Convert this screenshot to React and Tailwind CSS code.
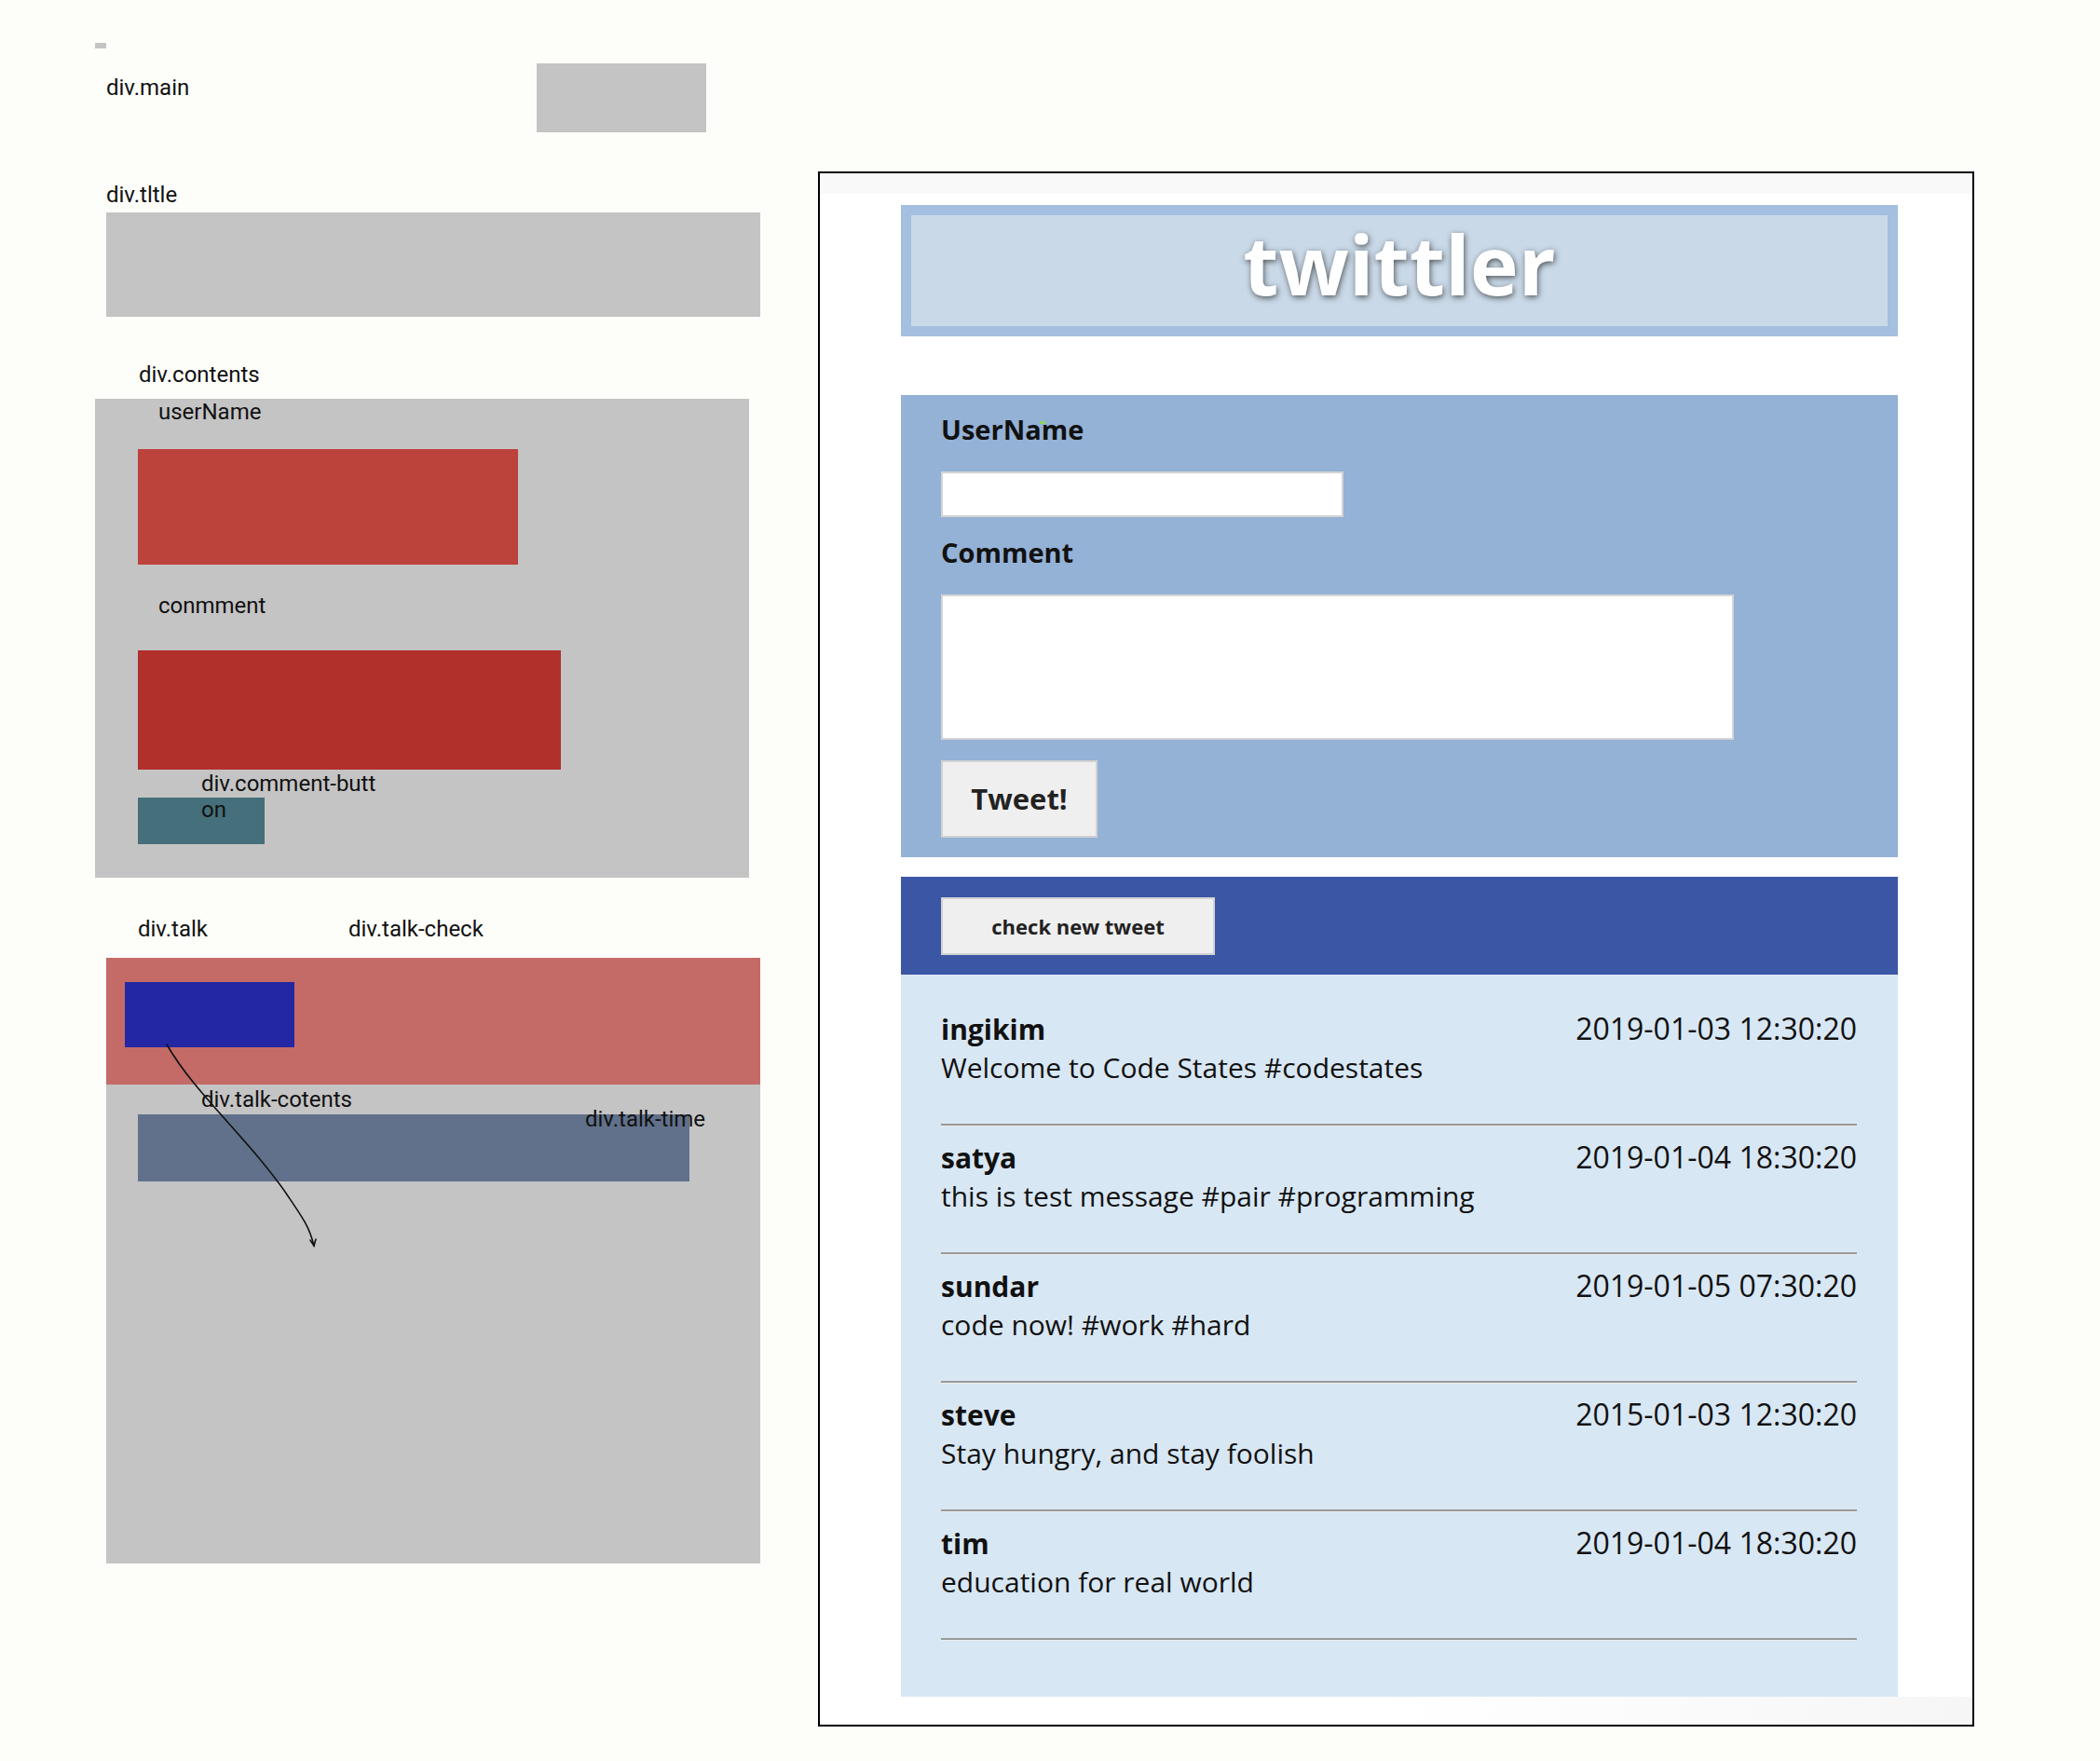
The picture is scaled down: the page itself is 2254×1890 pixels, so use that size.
import React from 'react';

const TWEETS = [
  { user: 'ingikim', message: 'Welcome to Code States #codestates', time: '2019-01-03 12:30:20' },
  { user: 'satya', message: 'this is test message #pair #programming', time: '2019-01-04 18:30:20' },
  { user: 'sundar', message: 'code now! #work #hard', time: '2019-01-05 07:30:20' },
  { user: 'steve', message: 'Stay hungry, and stay foolish', time: '2015-01-03 12:30:20' },
  { user: 'tim', message: 'education for real world', time: '2019-01-04 18:30:20' },
];

const Label = ({ children, className = '' }) => (
  <div className={`font-['Roboto',sans-serif] text-[24px] leading-[28px] text-[#111] ${className}`}>
    {children}
  </div>
);

// wireframe sketch on the left
const Wireframe = () => (
  <div className="relative w-[878px] shrink-0">
    <div className="ml-[102px] mt-[46px] w-[12px] h-[6px] bg-[#c4c4c4]" />

    <div className="ml-[114px] mt-[16px] flex">
      <Label className="w-[462px] pt-[12px]">div.main</Label>
      <div className="w-[182px] h-[74px] bg-[#c4c4c4]" />
    </div>

    <Label className="ml-[114px] mt-[53px]">div.tltle</Label>
    <div className="ml-[114px] mt-[5px] w-[702px] h-[112px] bg-[#c4c4c4]" />

    <Label className="ml-[149px] mt-[48px]">div.contents</Label>
    <div className="ml-[102px] mt-[12px] w-[702px] h-[514px] bg-[#c4c4c4]">
      <Label className="ml-[68px]">userName</Label>
      <div className="ml-[46px] mt-[26px] w-[408px] h-[124px] bg-[#bc423c]" />
      <Label className="ml-[68px] mt-[30px]">conmment</Label>
      <div className="ml-[46px] mt-[34px] w-[454px] h-[128px] bg-[#b1302c]" />
      <Label className="relative z-10 ml-[114px] mt-[1px]">
        div.comment-butt
        <br />
        on
      </Label>
      <div className="ml-[46px] -mt-[27px] w-[136px] h-[50px] bg-[#456f7b]" />
    </div>

    <div className="ml-[148px] mt-[41px] flex">
      <Label className="w-[226px]">div.talk</Label>
      <Label>div.talk-check</Label>
    </div>
    <div className="ml-[114px] mt-[17px] w-[702px] h-[136px] bg-[#c46b67] pt-[26px] pl-[20px]">
      <div className="w-[182px] h-[70px] bg-[#2427a4]" />
    </div>
    <div className="relative ml-[114px] w-[702px] h-[514px] bg-[#c4c4c4]">
      <Label className="relative z-10 ml-[102px] pt-[2px]">div.talk-cotents</Label>
      <div className="ml-[34px] mt-[2px] w-[592px] h-[72px] bg-[#61718b]" />
      <Label className="absolute left-[514px] top-[23px] z-10">div.talk-time</Label>
    </div>

    <svg
      className="absolute left-[170px] top-[1115px] z-20"
      width="180"
      height="230"
      viewBox="0 0 180 230"
      fill="none"
      stroke="#111"
      strokeWidth="1.6"
      strokeLinecap="round"
    >
      <path d="M9 6 C 40 60, 100 110, 140 170 C 155 192, 162 202, 167 222" />
      <path d="M163 216 L167 222 L169 215" />
    </svg>
  </div>
);

const TweetItem = ({ tweet }) => (
  <div className="pb-[16.1px]">
    <div className="flex items-baseline justify-between">
      <div className="text-[30px] leading-[33px] font-bold text-[#111]">{tweet.user}</div>
      <div className="text-[32px] leading-[33px] text-[#111]">{tweet.time}</div>
    </div>
    <div className="mt-[9px] text-[30px] leading-[32px] text-[#111]">{tweet.message}</div>
    <div className="mt-[44px] h-[3px] border-t-2 border-t-[#9a9a9a] border-b border-b-[#ececec]" />
  </div>
);

const Twittler = () => (
  <div className="mt-[184px] w-[1241px] h-[1669px] shrink-0 border-2 border-black bg-white font-['Open_Sans',sans-serif]">
    <div className="h-[22px] bg-[#f9f9fa]" />

    <div className="ml-[87px] mt-[12px] w-[1070px]">
      <div className="h-[141px] border-[11px] border-[#a4bfdf] bg-[#c9d9e8]">
        <div className="text-center text-[88px] leading-[104px] font-bold text-white [text-shadow:1px_2px_6px_rgba(40,40,40,0.75)]">
          twittler
        </div>
      </div>

      <div className="mt-[63px] h-[496px] bg-[#94b1d6] pl-[43px] pt-[16px]">
        <div className="relative text-[29px] leading-[42px] font-bold text-[#111]">
          UserName
          <span className="absolute left-[106px] top-[12px] w-[6px] h-[3px] bg-[#8fd45f]" />
        </div>
        <div className="mt-[24px] w-[432px] h-[49px] bg-white border-2 border-[#d4d4d4]" />
        <div className="mt-[17px] text-[29px] leading-[42px] font-bold text-[#111]">Comment</div>
        <div className="mt-[24px] w-[851px] h-[156px] bg-white border-2 border-[#d4d4d4]" />
        <div className="mt-[22px] w-[168px] h-[83px] bg-[#efefef] border-2 border-[#d2d2d2] flex items-center justify-center text-[31px] font-bold text-[#222]">
          Tweet!
        </div>
      </div>

      <div className="mt-[21px] h-[105px] bg-[#3c56a6] pl-[43px] pt-[22px]">
        <div className="w-[294px] h-[62px] bg-[#efefef] border-2 border-[#d2d2d2] flex items-center justify-center text-[22px] font-bold text-[#222]">
          check new tweet
        </div>
      </div>

      <div className="h-[775px] bg-[#d8e7f4] pl-[43px] pr-[44px] pt-[41px]">
        {TWEETS.map((t) => (
          <TweetItem key={t.user} tweet={t} />
        ))}
      </div>
    </div>

    <div className="h-[30px] bg-linear-to-r from-white via-white to-[#f6f6f6]" />
  </div>
);

export default function App() {
  return (
    <div className="flex min-h-[1890px] w-full bg-[#fdfefa]">
      <Wireframe />
      <Twittler />
    </div>
  );
}
